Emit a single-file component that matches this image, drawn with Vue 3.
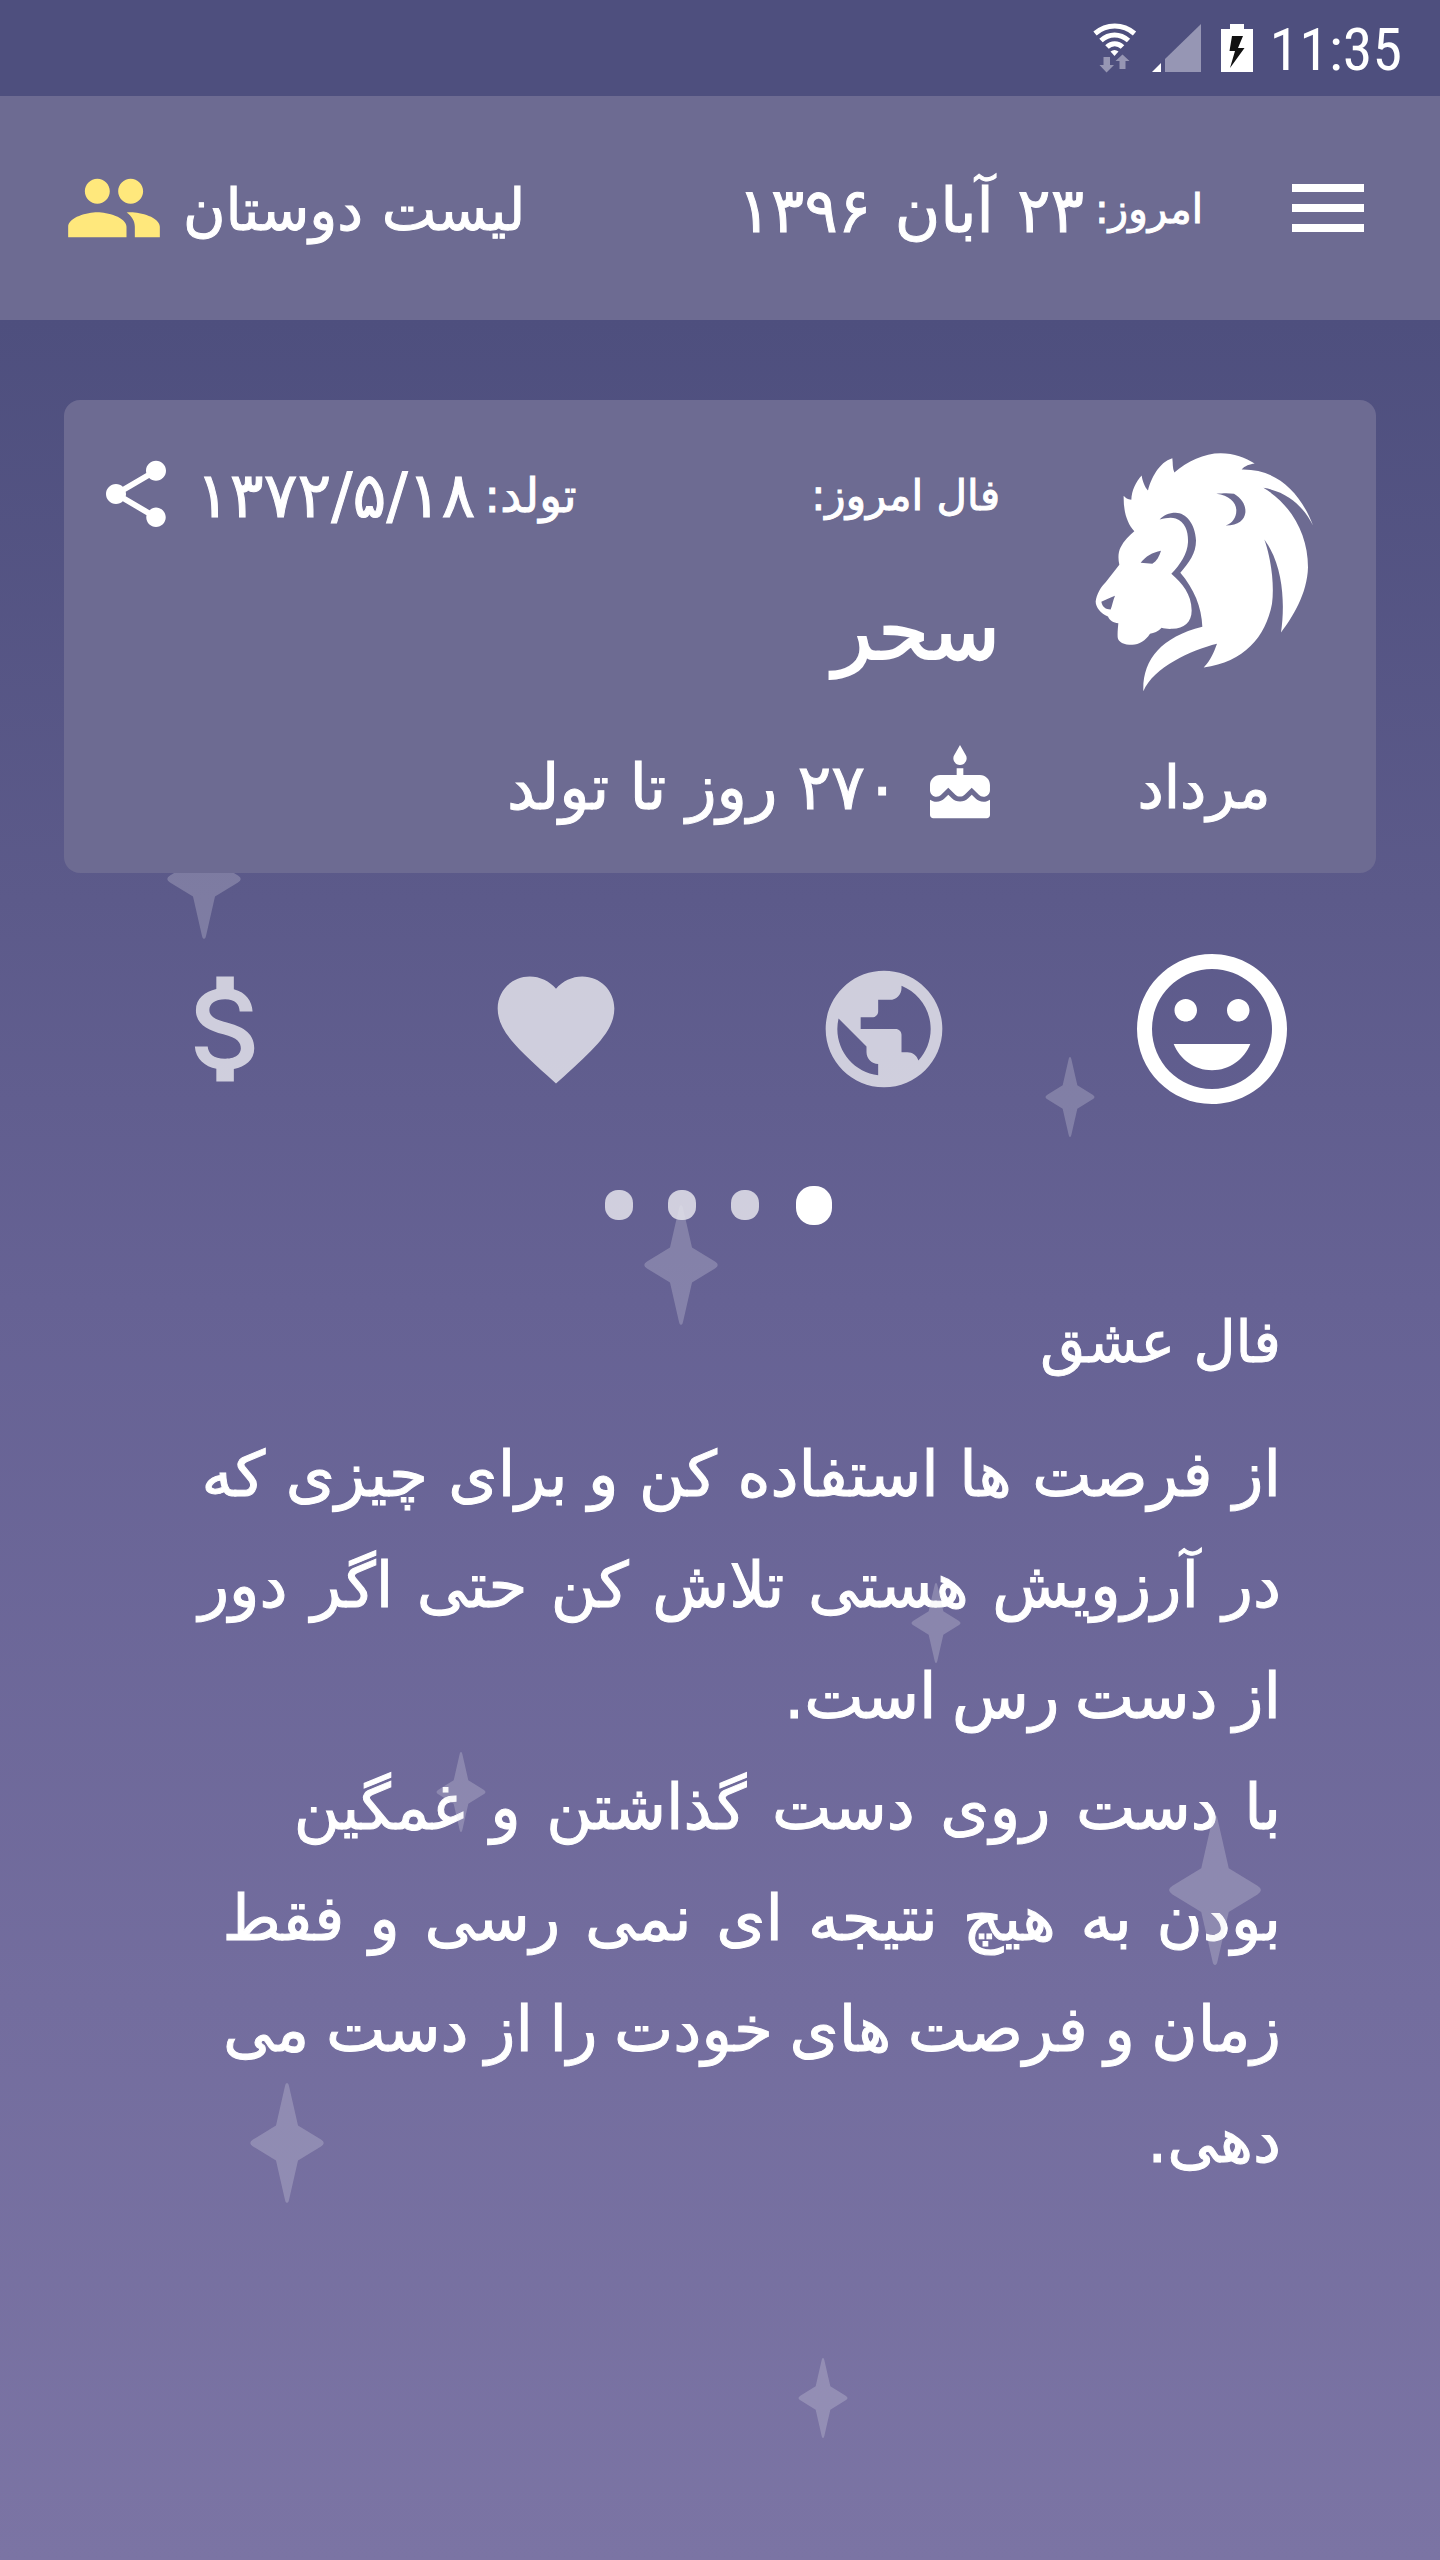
<script setup>
import { ref } from "vue";

// Decorative stars scattered over the background
const stars = [
  { id: 1, x: 204, y: 879, size: "md" },
  { id: 2, x: 1070, y: 1097, size: "sm" },
  { id: 3, x: 681, y: 1265, size: "md" },
  { id: 4, x: 936, y: 1623, size: "sm" },
  { id: 5, x: 461, y: 1792, size: "sm" },
  { id: 6, x: 1215, y: 1890, size: "lg" },
  { id: 7, x: 287, y: 2143, size: "md" },
  { id: 8, x: 823, y: 2398, size: "sm" },
];

const tabs = [
  {
    id: "love",
    path: "M11.99 2C6.47 2 2 6.48 2 12s4.47 10 9.99 10C17.52 22 22 17.52 22 12S17.52 2 11.99 2zM12 20c-4.42 0-8-3.58-8-8s3.58-8 8-8 8 3.58 8 8-3.58 8-8 8zm3.5-9c.83 0 1.5-.67 1.5-1.5S16.33 8 15.5 8 14 8.67 14 9.5s.67 1.5 1.5 1.5zm-7 0c.83 0 1.5-.67 1.5-1.5S9.33 8 8.5 8 7 8.67 7 9.5 7.67 11 8.5 11zm3.5 6.5c2.33 0 4.31-1.46 5.11-3.5H6.89c.8 2.04 2.78 3.5 5.11 3.5z",
  },
  {
    id: "world",
    path: "M12 2C6.48 2 2 6.48 2 12s4.48 10 10 10 10-4.48 10-10S17.52 2 12 2zm-1 17.93c-3.95-.49-7-3.85-7-7.93 0-.62.08-1.21.21-1.79L9 15v1c0 1.1.9 2 2 2v1.93zm6.9-2.54c-.26-.81-1-1.39-1.9-1.39h-1v-3c0-.55-.45-1-1-1H8v-2h2c.55 0 1-.45 1-1V7h2c1.1 0 2-.9 2-2v-.41c2.93 1.19 5 4.06 5 7.41 0 2.08-.8 3.97-2.1 5.39z",
  },
  {
    id: "heart",
    path: "M12 21.35l-1.45-1.32C5.4 15.36 2 12.28 2 8.5 2 5.42 4.42 3 7.5 3c1.74 0 3.41.81 4.5 2.09C13.09 3.81 14.76 3 16.5 3 19.58 3 22 5.42 22 8.5c0 3.78-3.4 6.86-8.55 11.54L12 21.35z",
  },
  {
    id: "money",
    path: "M11.8 10.9c-2.27-.59-3-1.2-3-2.15 0-1.09 1.01-1.85 2.7-1.85 1.78 0 2.44.85 2.5 2.1h2.21c-.07-1.72-1.12-3.3-3.21-3.81V3h-3v2.16c-1.94.42-3.5 1.68-3.5 3.61 0 2.31 1.91 3.46 4.7 4.13 2.5.6 3 1.48 3 2.41 0 .69-.49 1.79-2.7 1.79-2.06 0-2.87-.92-2.98-2.1h-2.2c.12 2.19 1.76 3.42 3.68 3.83V21h3v-2.15c1.95-.37 3.5-1.5 3.5-3.55 0-2.84-2.43-3.81-4.7-4.4z",
  },
];

const activeTab = ref("love");

// Reading lines, with the extra space between words for each
const lines = [
  { text: "از فرصت ها استفاده کن و برای چیزی که", spacing: 0.5 },
  { text: "در آرزویش هستی تلاش کن حتی اگر دور", spacing: 3.5 },
  { text: "از دست رس است.", spacing: -4.5 },
  { text: "با دست روی دست گذاشتن و غمگین", spacing: 5.5 },
  { text: "بودن به هیچ نتیجه ای نمی رسی و فقط", spacing: 4.8 },
  { text: "زمان و فرصت های خودت را از دست می", spacing: -3.5 },
  { text: "دهی.", spacing: 0 },
];
</script>

<template>
  <div class="screen" dir="rtl">
    <div class="status-bar" dir="ltr">
      <svg class="wifi" viewBox="0 0 44 50">
        <g fill="none" stroke="#fff" stroke-width="5">
          <path d="M2 10.5C13.5 .5 30 .5 41.5 10.5" />
          <path d="M8 17.5C16 10 27 10 35.5 17.5" />
          <path d="M14 24C18.5 19.5 25 19.5 29.5 24" />
        </g>
        <path d="M17.5 28.5Q21.5 25.5 25.500 28.5L21.5 33Z" fill="#fff" />
        <path d="M10.5 34h6.5v8h4l-7.5 7.5-7-7.5h4zM26.5 46v-8h-4l7-6.500 7 6.500h-4v8z" fill="#9696b3" />
      </svg>
      <svg class="signal" viewBox="0 0 49 48">
        <path d="M49 0V48H13V35Z" fill="#9696b4" />
        <path d="M9 39V48H0Z" fill="#fff" />
      </svg>
      <svg class="battery" viewBox="0 0 32 48">
        <path d="M9 0H23V5H32V48H0V5H9Z" fill="#fff" />
        <path d="M11 12H22L17 24H23.5L9 44L14 27H8.5Z" fill="#111" />
      </svg>
      <span class="clock">11:35</span>
    </div>

    <header class="header">
      <svg class="menu" viewBox="0 0 24 24"><path d="M3 18h18v-2H3v2zm0-5h18v-2H3v2zm0-7v2h18V6H3z" /></svg>
      <span class="today-label">امروز:</span>
      <span class="today-date">۲۳ آبان ۱۳۹۶</span>
      <div class="friends">
        <span>لیست دوستان</span>
        <svg viewBox="0 0 24 24">
          <path d="M16 11c1.66 0 2.99-1.34 2.99-3S17.66 5 16 5c-1.66 0-3 1.34-3 3s1.34 3 3 3zm-8 0c1.66 0 2.99-1.34 2.99-3S9.66 5 8 5C6.34 5 5 6.34 5 8s1.34 3 3 3zm0 2c-2.33 0-7 1.17-7 3.5V19h14v-2.5c0-2.33-4.67-3.5-7-3.5zm8 0c-.29 0-.62.02-.97.05 1.16.84 1.97 1.97 1.97 3.45V19h6v-2.5c0-2.33-4.67-3.5-7-3.5z" />
        </svg>
      </div>
    </header>

    <section class="card">
      <div class="sign">
        <svg class="lion" viewBox="100 95 660 725">
          <path
            fill-rule="evenodd"
            d="M335 113C337 128 335 142 341 156C380 122 430 98 480 98C520 98 555 112 582 129C568 131 552 136 543 147C640 145 715 205 757 315C735 270 690 215 608 202C690 250 742 340 742 440C740 520 695 590 661 636C672 560 672 440 611 357C630 410 642 490 634 550C615 650 550 725 429 741C450 720 460 695 469 670C390 690 280 740 248 812C245 720 300 650 425 619C423 560 400 505 359 457C385 425 406 400 406 360C404 310 375 277 345 277C325 277 308 285 297 297C315 293 330 290 345 294C375 305 383 335 382 365C380 400 360 430 332 460C365 490 392 520 393 570C393 605 370 625 335 625C322 626 310 624 303 622C292 634 280 638 268 640C255 660 235 673 215 673C190 673 172 665 171 650C170 635 172 620 173 608C158 607 147 600 142 588C120 580 105 560 105 543C108 520 120 500 135 485L176 433C172 415 172 395 180 380C190 360 205 345 221 332C200 310 188 275 189 226C195 232 200 237 212 238C213 210 225 185 243 165C245 180 252 200 262 210C270 175 295 125 335 113ZM467 220C490 218 505 218 520 220C545 235 556 255 554 277C551 298 535 315 495 315C515 308 527 292 527 270C527 245 505 225 467 220ZM240 427C255 408 275 396 301 391C296 408 288 422 275 430ZM122 544C135 538 148 532 163 526C157 540 155 555 150 567C135 567 125 560 122 544Z"
          />
        </svg>
        <span class="sign-name">مرداد</span>
      </div>
      <div class="details">
        <div class="row">
          <span class="fal-label">فال امروز:</span>
          <div class="birth">
            <span class="birth-label">تولد:</span>
            <span class="birth-date">۱۳۷۲/۵/۱۸</span>
            <svg class="share" viewBox="0 0 24 24">
              <path d="M18 16.08c-.76 0-1.44.3-1.96.77L8.91 12.7c.05-.23.09-.46.09-.7s-.04-.47-.09-.7l7.05-4.11c.54.5 1.25.81 2.04.81 1.66 0 3-1.34 3-3s-1.34-3-3-3-3 1.34-3 3c0 .24.04.47.09.7L8.04 9.81C7.5 9.31 6.79 9 6 9c-1.66 0-3 1.34-3 3s1.34 3 3 3c.79 0 1.5-.31 2.04-.81l7.12 4.16c-.05.21-.08.43-.08.65 0 1.61 1.31 2.92 2.92 2.92 1.61 0 2.92-1.31 2.92-2.92s-1.31-2.92-2.92-2.92z" />
            </svg>
          </div>
        </div>
        <div class="person">سحر</div>
        <div class="countdown">
          <svg viewBox="0 0 24 24">
            <path d="M12 6c1.11 0 2-.9 2-2 0-.38-.1-.73-.29-1.03L12 0l-1.71 2.97c-.19.3-.29.65-.29 1.03 0 1.1.9 2 2 2zm4.6 9.99l-1.07-1.07-1.08 1.07c-1.3 1.3-3.58 1.31-4.89 0l-1.07-1.07-1.09 1.07C6.75 16.64 5.88 17 4.96 17c-.73 0-1.4-.23-1.96-.61V21c0 .55.45 1 1 1h16c.55 0 1-.45 1-1v-4.61c-.56.38-1.23.61-1.96.61-.92 0-1.79-.36-2.44-1.01zM18 9h-5V7h-2v2H6c-1.66 0-3 1.34-3 3v1.54c0 1.08.88 1.96 1.96 1.96.52 0 1.02-.2 1.38-.57l2.14-2.13 2.13 2.13c.74.74 2.03.74 2.77 0l2.14-2.13 2.13 2.13c.37.37.86.57 1.38.57 1.08 0 1.96-.88 1.96-1.96V12C21 10.34 19.66 9 18 9z" />
          </svg>
          <span>۲۷۰ روز تا تولد</span>
        </div>
      </div>
    </section>

    <nav class="tabs">
      <button
        v-for="tab in tabs"
        :key="tab.id"
        type="button"
        class="tab"
        :class="{ active: tab.id === activeTab }"
        @click="activeTab = tab.id"
      >
        <svg viewBox="0 0 24 24"><path :d="tab.path" /></svg>
      </button>
    </nav>

    <div class="dots">
      <i v-for="tab in tabs" :key="tab.id" class="dot" :class="{ active: tab.id === activeTab }"></i>
    </div>

    <main class="reading">
      <h1>فال عشق</h1>
      <p v-for="(line, i) in lines" :key="i" :style="{ wordSpacing: line.spacing + 'px' }">{{ line.text }}</p>
    </main>

    <svg
      v-for="star in stars"
      :key="star.id"
      class="star"
      :class="star.size"
      :style="{ left: star.x + 'px', top: star.y + 'px' }"
      viewBox="-37 -60 74 120"
    >
      <path d="M0 -60Q1.5 -60 2 -57L11 -17.5L34 -3.5Q39.5 0 34 3.5L11 17.5L2 57Q1.5 60 0 60Q-1.5 60 -2 57L-11 17.5L-34 3.5Q-39.5 0 -34 -3.5L-11 -17.5L-2 -57Q-1.5 -60 0 -60Z" />
    </svg>
  </div>
</template>

<style>
body {
  margin: 0;
}
</style>

<style scoped>
.screen {
  position: relative;
  width: 1440px;
  height: 2560px;
  overflow: hidden;
  color: #fff;
  font-family: "DejaVu Sans", sans-serif;
  white-space: nowrap;
  background: linear-gradient(#4e4f7e 0, #4e4f7e 320px, #5c5a8a 900px, #666294 1300px, #736d9e 2000px, #7b74a4 2560px);
  -webkit-text-stroke: 1px #fff;
}

svg {
  display: block;
  flex: none;
  fill: #fff;
}

.status-bar {
  display: flex;
  align-items: center;
  justify-content: flex-end;
  height: 96px;
  padding-right: 38px;
}

.wifi {
  width: 44px;
  height: 50px;
  margin-right: 15px;
}

.signal {
  width: 49px;
  height: 48px;
  margin-right: 20px;
}

.battery {
  width: 32px;
  height: 48px;
  margin-right: 17px;
}

.clock {
  padding-top: 4px;
  font-family: Roboto, sans-serif;
  font-size: 60px;
  font-stretch: 75%;
  line-height: 92px;
  -webkit-text-stroke: 0;
}

.header {
  display: flex;
  align-items: center;
  height: 224px;
  padding: 0 64px;
  background: #6d6b92;
}

.menu {
  width: 96px;
  height: 96px;
  margin-left: 77px;
}

.today-label {
  margin-left: 11px;
  padding-top: 2px;
  font-size: 40.5px;
}

.today-date {
  padding-top: 4px;
  font-size: 62px;
  word-spacing: 4px;
}

.friends {
  display: flex;
  align-items: center;
  gap: 19px;
  margin-right: auto;
  font-size: 58px;
}

.friends span {
  padding-top: 3px;
}

.friends svg {
  width: 100px;
  height: 100px;
  fill: #ffe87c;
}

.card {
  position: relative;
  z-index: 2;
  display: flex;
  gap: 32px;
  box-sizing: border-box;
  height: 473px;
  margin: 80px 64px 0;
  padding: 52px 0 0 32px;
  border-radius: 16px;
  background: #6d6b92;
}

.sign {
  display: flex;
  flex-direction: column;
  align-items: center;
  width: 344px;
}

.lion {
  width: 220px;
  height: 242px;
}

.sign-name {
  margin-top: 54px;
  font-size: 59px;
  line-height: 80px;
}

.details {
  flex: 1;
}

.row {
  display: flex;
  align-items: center;
  justify-content: space-between;
  height: 80px;
  padding-top: 3px;
}

.fal-label {
  font-size: 42px;
}

.birth {
  display: flex;
  align-items: center;
}

.birth-label {
  margin-left: 9px;
  font-size: 47px;
}

.birth-date {
  margin-left: 20px;
  font-size: 63px;
}

.share {
  width: 80px;
  height: 80px;
  margin-top: -2px;
}

.person {
  height: 210px;
  font-size: 82px;
  line-height: 192px;
  -webkit-text-stroke: 2px #fff;
}

.countdown {
  display: flex;
  align-items: center;
  gap: 21px;
  height: 80px;
  font-size: 63px;
}

.countdown svg {
  width: 80px;
  height: 80px;
}

.countdown span {
  padding-top: 4px;
}

.tabs {
  display: flex;
  height: 180px;
  margin: 66px 64px 0;
}

.tab {
  display: flex;
  flex: 1;
  align-items: center;
  justify-content: center;
  padding: 0;
  border: 0;
  background: none;
  opacity: 0.7;
}

.tab svg {
  width: 140px;
  height: 140px;
}

.tab.active {
  opacity: 1;
}

.tab.active svg {
  width: 180px;
  height: 180px;
}

.dots {
  display: flex;
  gap: 35px;
  align-items: center;
  height: 39px;
  margin-top: 67px;
  padding-right: 608px;
}

.dot {
  width: 28px;
  height: 30px;
  margin-top: -2px;
  border-radius: 13px;
  background: rgba(255, 255, 255, 0.7);
}

.dot.active {
  width: 36px;
  height: 39px;
  margin-top: 0;
  margin-left: 2px;
  border-radius: 17px;
  background: #fff;
}

.reading {
  padding: 62px 159px 0 0;
  line-height: 111px;
}

.reading h1 {
  margin: 0 0 21px;
  font-size: 58px;
  font-weight: 400;
  line-height: 111px;
}

.reading p {
  margin: 0;
  font-size: 63px;
}

.star {
  position: absolute;
  z-index: 1;
  width: 74px;
  height: 120px;
  transform: translate(-50%, -50%);
  fill: rgba(228, 226, 236, 0.25);
  pointer-events: none;
}

.star.sm {
  width: 50px;
  height: 80px;
}

.star.lg {
  width: 93px;
  height: 150px;
}
</style>
